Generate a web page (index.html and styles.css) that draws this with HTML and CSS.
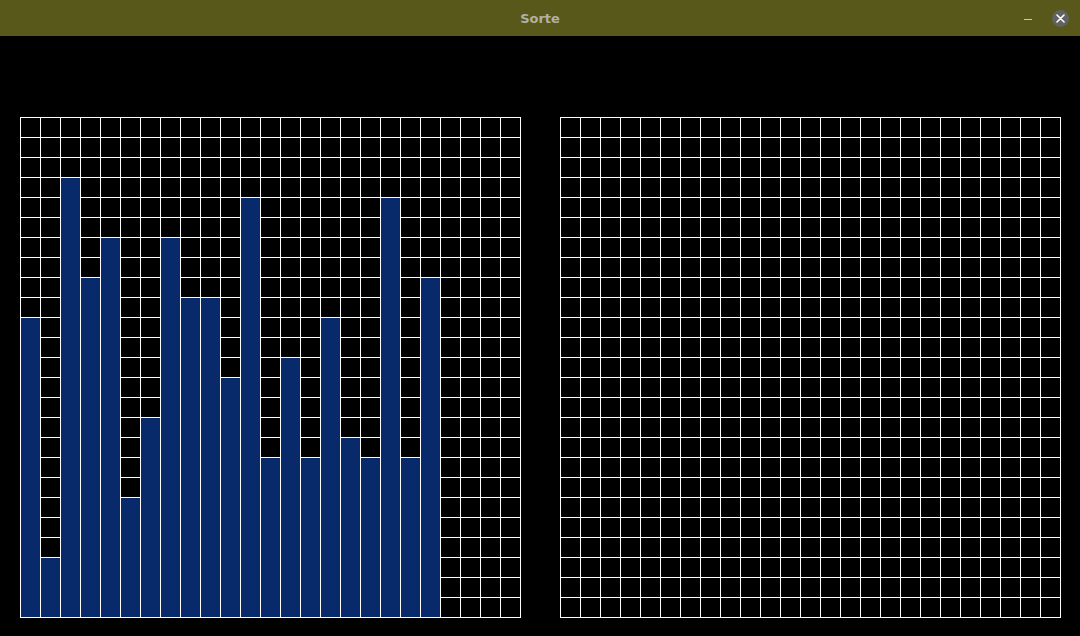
FILE: index.html
```html
<!DOCTYPE html>
<html lang="pt-BR">
<head>
  <meta charset="UTF-8">
  <title>Sorte</title>
  <link rel="stylesheet" href="styles.css">
</head>
<body>

  <div id="titleBar">
    <div></div>
    <div id="title">Sorte</div>
    <div id="controls">
      <span class="minimize"></span>
      <span class="close">
        <svg width="9" height="9" viewBox="0 0 9 9">
          <path d="M1 1 L8 8 M8 1 L1 8" stroke="#fff" stroke-width="1.6" stroke-linecap="round"/>
        </svg>
      </span>
    </div>
  </div>

  <div id="main">
    <!-- tabuleiro com as barras sorteadas -->
    <div class="board">
      <div class="bar" style="height:299px"></div>
      <div class="bar" style="height:59px"></div>
      <div class="bar" style="height:439px"></div>
      <div class="bar" style="height:339px"></div>
      <div class="bar" style="height:379px"></div>
      <div class="bar" style="height:119px"></div>
      <div class="bar" style="height:199px"></div>
      <div class="bar" style="height:379px"></div>
      <div class="bar" style="height:319px"></div>
      <div class="bar" style="height:319px"></div>
      <div class="bar" style="height:239px"></div>
      <div class="bar" style="height:419px"></div>
      <div class="bar" style="height:159px"></div>
      <div class="bar" style="height:259px"></div>
      <div class="bar" style="height:159px"></div>
      <div class="bar" style="height:299px"></div>
      <div class="bar" style="height:179px"></div>
      <div class="bar" style="height:159px"></div>
      <div class="bar" style="height:419px"></div>
      <div class="bar" style="height:159px"></div>
      <div class="bar" style="height:339px"></div>
    </div>

    <!-- tabuleiro vazio -->
    <div class="board"></div>
  </div>

</body>
</html>
```

FILE: styles.css
```css
body {
  margin: 0;
  padding: 0;
  background: #000;
  font-family: 'DejaVu Sans', sans-serif;
  overflow: hidden;
}

#titleBar {
  height: 36px;
  background: #58581b;
  display: grid;
  grid-template-columns: 1fr auto 1fr;
  align-items: center;
}

#title {
  color: #b0b0a6;
  font-size: 13px;
  font-weight: bold;
}

#controls {
  display: flex;
  justify-content: flex-end;
  align-items: center;
  gap: 20px;
  padding-right: 11px;
}

.minimize {
  width: 8px;
  height: 1px;
  margin-top: 3px;
  background: #c8c8c0;
}

.close {
  width: 17px;
  height: 17px;
  border-radius: 50%;
  background: #626262;
  display: flex;
  justify-content: center;
  align-items: center;
}

#main {
  display: flex;
  gap: 39px;
  padding: 81px 0 0 20px;
}

.board {
  width: 500px;
  height: 500px;
  border-right: 1px solid #fff;
  border-bottom: 1px solid #fff;
  background-image:
    linear-gradient(90deg, #fff 1px, transparent 1px),
    linear-gradient(#fff 1px, transparent 1px);
  background-size: 20px 20px;
  display: flex;
  align-items: flex-end;
}

.bar {
  width: 19px;
  margin-left: 1px;
  background: #08296a;
}
```
